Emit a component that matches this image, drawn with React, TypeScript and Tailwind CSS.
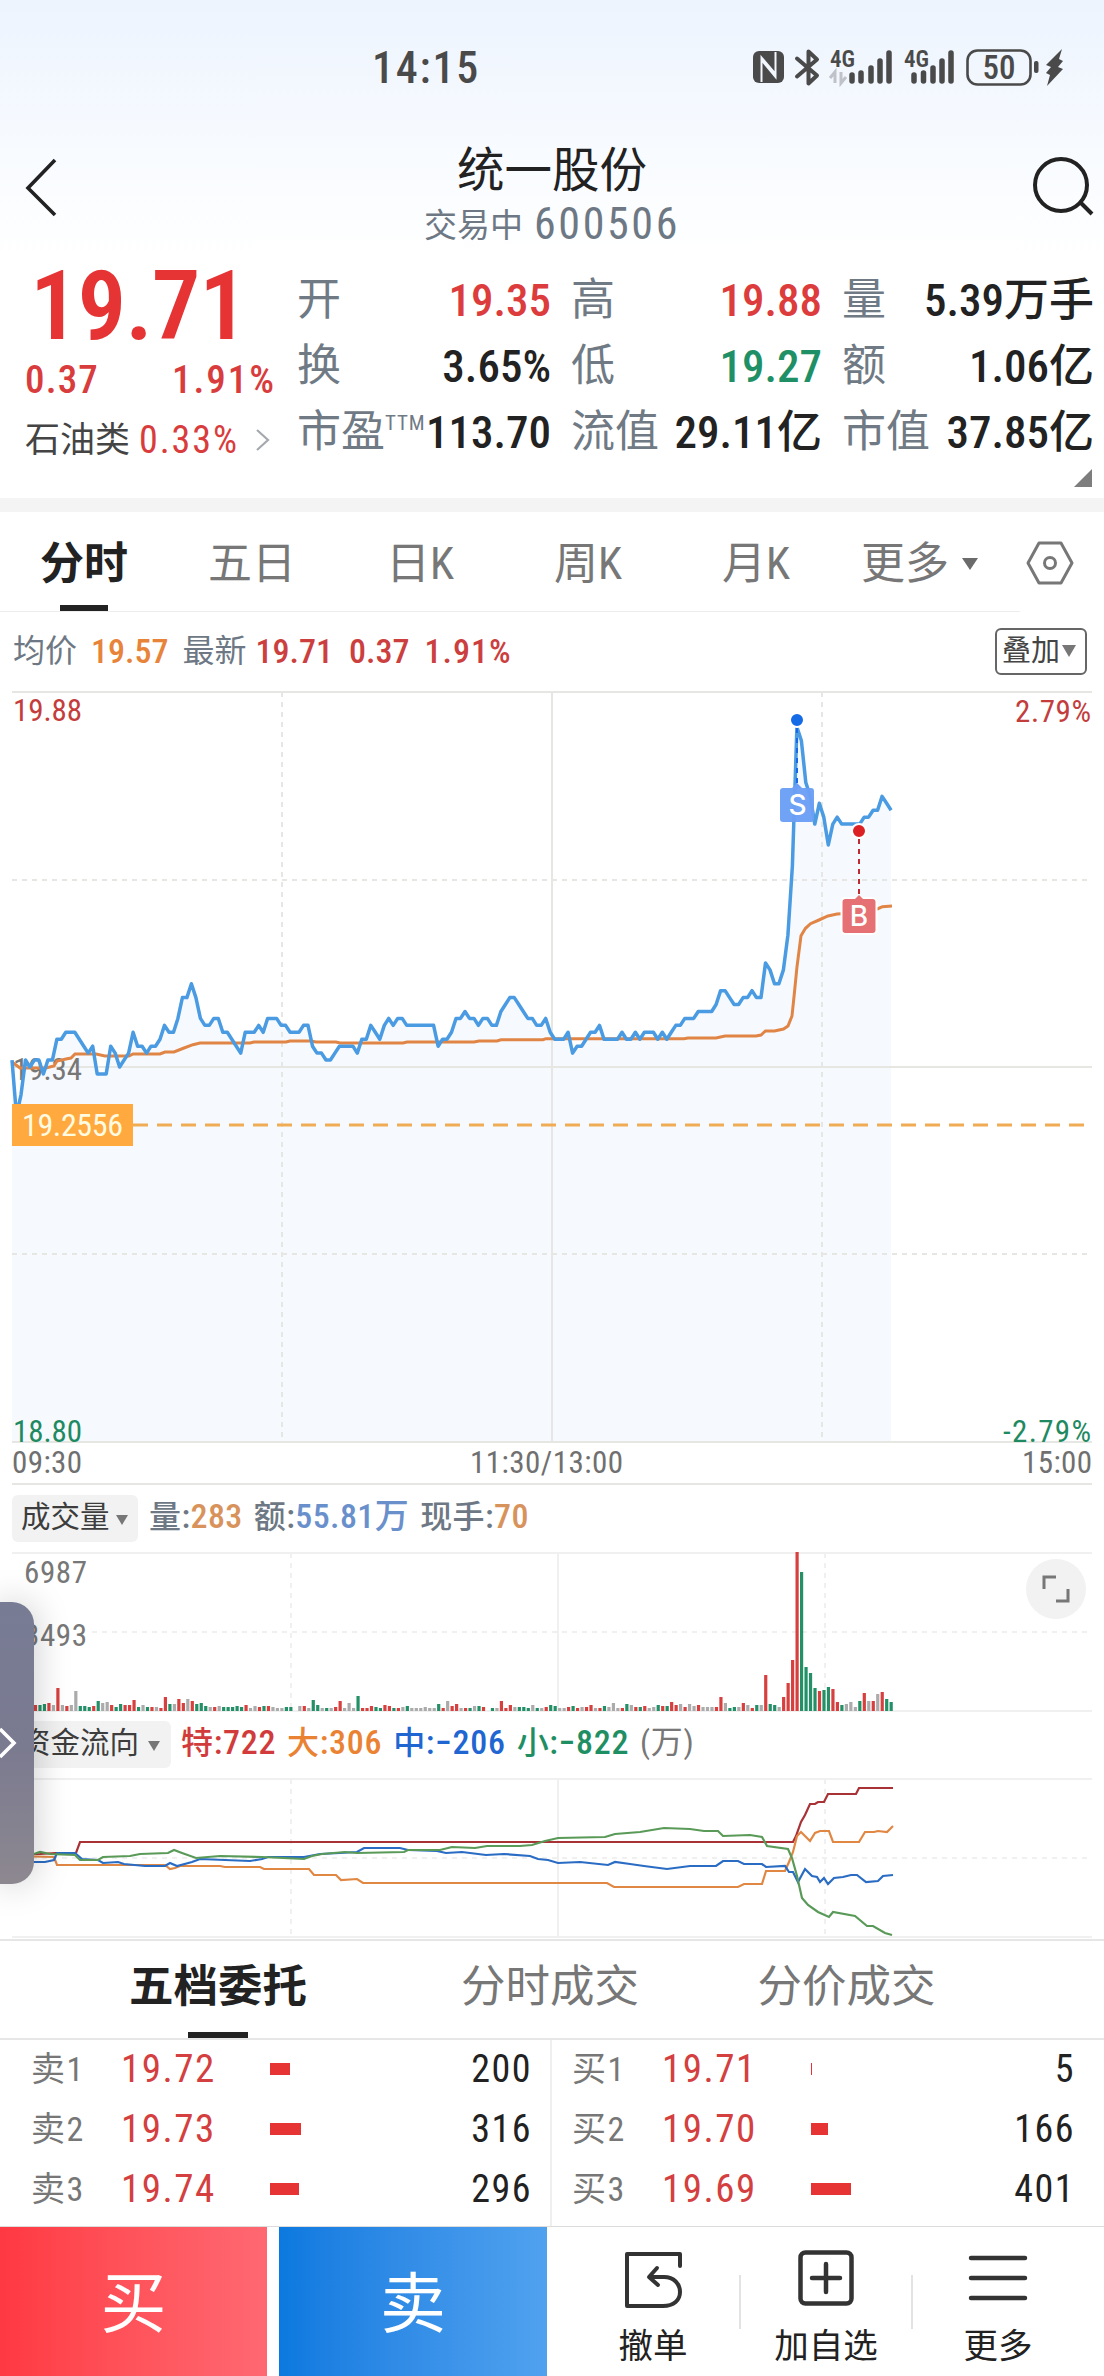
import type { ReactNode } from 'react';

const START_X = 12;
const STEP = 4.485;

// price per minute, in cents above the previous close (19.34)
const prices = [
  1, -7, -4, 1, 0, 1, 1, -1, 1, 1, 4, 4, 5, 5, 5, 4, 3, 2, 3, -1, -1, -1, 3, 2,
  0, 1, 2, 5, 3, 3, 2, 3, 3, 4, 6, 5, 5, 7, 10, 10, 12, 10, 7, 6, 6, 7, 7, 5, 5,
  4, 3, 2, 5, 5, 5, 6, 5, 7, 7, 7, 6, 6, 5, 5, 5, 6, 6, 3, 2, 2, 1, 1, 2, 3, 3,
  3, 3, 2, 4, 4, 6, 5, 4, 6, 7, 6, 7, 7, 6, 6, 6, 6, 6, 6, 6, 3, 4, 4, 5, 7, 7,
  8, 7, 7, 6, 7, 7, 6, 6, 8, 9, 10, 10, 9, 8, 7, 7, 6, 6, 7, 5, 4, 4, 4, 5, 2, 3,
  3, 4, 5, 5, 6, 4, 4, 4, 4, 5, 4, 4, 5, 4, 5, 5, 5, 4, 5, 4, 5, 6, 6, 7, 7, 7,
  8, 8, 8, 8, 9, 11, 11, 10, 9, 9, 10, 10, 11, 10, 10, 15, 14, 12, 12, 14, 19,
  29, 49, 47, 41, 39, 35, 38, 36, 32, 35, 36, 35, 35, 35, 35, 35, 36, 36, 37,
  37, 39, 38, 37,
];

const averageLine =
  '12,1062 16,1065 20,1068 46,1068 54,1066 57,1061 66,1059 71,1058 75,1054 96,1054 105,1056 129,1056 133,1054 160,1054 165,1052 174,1052 184,1048 193,1044.7 200,1043 250,1043 254,1042 286,1042 290,1041 311,1041 316,1042 336,1042 340,1043 403,1043 407,1042 474,1042 479,1041 497,1041 501,1039.7 543,1039.7 546,1038.7 684,1038.7 688,1038 716,1038 725,1036 756,1036 761,1035 765.5,1031 774.5,1031 783.5,1029 788,1026 792,1016 794.7,990 797,966.7 801,935.7 805.5,928.3 810.5,923.7 819,920 828,916 837,914 846,913.5 864,910.7 878,908.7 882.4,906.7 892,906';

// r = up, g = down, x = flat, followed by the bar height; _ is an empty minute
const volumes =
  'x6 r5 g6 r8 g6 r6 g6 g7 r8 x6 r23 x6 r5 x6 x20 g5 g5 g4 r5 g10 x8 x9 r6 g4 g7 r6 r6 r11 g4 x6 g4 r4 x4 r3 r14 g7 x7 r12 r8 x12 r10 g7 g8 g5 x4 r4 x5 g4 g4 g4 g5 g4 r6 x3 x5 r4 g5 r5 x4 x3 x3 g4 g4 _ x5 r5 x3 g11 g6 x3 g3 x3 r4 r10 x3 x8 x3 g15 r3 r3 r5 g4 g3 r6 r5 g3 r3 x4 g5 x3 x3 x3 x4 x3 x3 g7 r3 x10 r5 r7 x3 r3 g3 x5 g5 r4 _ g3 x3 r10 r3 r6 x4 g4 g4 g3 x6 g3 x3 r4 g6 g5 x3 x3 r4 g5 r3 x4 r4 r6 x3 r3 g5 x4 x8 x3 r3 g7 x6 r4 g4 r5 x3 x4 g6 r5 g5 r9 r6 x7 r4 x7 x5 r6 x4 x4 x4 r4 r14 x8 g3 g4 x4 r8 x6 r3 g6 x6 r36 g7 g6 x4 r14 r28 r51 r159 g139 g44 g38 g23 r20 g21 g24 r22 r9 g6 x7 x9 x4 g10 r18 x10 r10 x17 r19 g12 g9'.split(
    ' '
  );

const barColors: Record<string, string> = {
  r: '#d6403f',
  g: '#249068',
  x: '#ababab',
};

const flowLines = [
  {
    color: '#a83236',
    points:
      '12,1855 40,1854 56,1853 76,1853 80,1842 793,1842 796,1836 801,1822 805,1815 810,1804 815,1804 818,1802 824,1802 828,1794 856,1794 859,1788 893,1788',
  },
  {
    color: '#e18744',
    points:
      '12,1856 54,1857 57,1865 165,1865 170,1869 175,1868 180,1866 220,1866 225,1867 260,1867 264,1869 309,1869 314,1875 336,1875 341,1880 357,1879 363,1883 607,1883 614,1887 738,1887 744,1884 762,1884 766,1871 785,1871 789,1862 793,1852 797,1836 801,1832 805,1836 810,1841 815,1833 820,1831 829,1831 833,1842 859,1842 865,1832 874,1832 878,1831 887,1832 893,1826',
  },
  {
    color: '#2a6cc4',
    points:
      '12,1856 25,1860 34,1862 45,1862 54,1860 57,1853 75,1853 82,1859 98,1860 103,1863 118,1862 124,1864 145,1866 165,1866 170,1863 177,1866 192,1862 200,1859 250,1861 262,1859 268,1857 304,1857 320,1854 340,1853 357,1852 364,1848 400,1848 408,1850 437,1851 446,1853 462,1852 486,1855 504,1854 530,1856 538,1859 548,1860 558,1863 580,1862 608,1865 615,1862 630,1864 644,1866 667,1869 690,1866 716,1866 723,1861 738,1861 744,1864 762,1864 766,1867 785,1866 789,1872 793,1872 798,1882 805,1869 812,1876 817,1877 820,1882 824,1878 828,1884 834,1878 843,1877 851,1875 857,1875 866,1882 878,1881 883,1876 893,1875',
  },
  {
    color: '#5a9a58',
    points:
      '12,1855 34,1854 40,1852 50,1854 75,1855 80,1860 98,1860 103,1857 130,1856 140,1854 168,1853 174,1850 182,1853 196,1858 220,1856 262,1857 304,1859 312,1856 322,1854 345,1852 357,1853 404,1852 408,1850 440,1850 452,1847 475,1848 487,1846 520,1846 532,1845 545,1841 558,1838 605,1837 615,1834 640,1832 664,1828 690,1829 704,1831 718,1831 723,1836 750,1835 762,1837 767,1846 788,1849 792,1858 797,1876 802,1898 808,1905 818,1912 829,1917 833,1912 855,1916 867,1926 873,1926 885,1933 892,1935',
  },
];

const tabs = ['分时', '五日', '日K', '周K', '月K'];

const quotes = [
  { label: '开', value: '19.35', color: 'text-[#dc3c3c]' },
  { label: '高', value: '19.88', color: 'text-[#dc3c3c]' },
  { label: '量', value: '5.39万手', color: 'text-[#222]' },
  { label: '换', value: '3.65%', color: 'text-[#222]' },
  { label: '低', value: '19.27', color: 'text-[#1f9066]' },
  { label: '额', value: '1.06亿', color: 'text-[#222]' },
  { label: '市盈', sup: 'TTM', value: '113.70', color: 'text-[#222]' },
  { label: '流值', value: '29.11亿', color: 'text-[#222]' },
  { label: '市值', value: '37.85亿', color: 'text-[#222]' },
];

const sells = [
  { label: '卖1', price: '19.72', qty: 200, bar: 20 },
  { label: '卖2', price: '19.73', qty: 316, bar: 31 },
  { label: '卖3', price: '19.74', qty: 296, bar: 29 },
];

const buys = [
  { label: '买1', price: '19.71', qty: 5, bar: 1 },
  { label: '买2', price: '19.70', qty: 166, bar: 17 },
  { label: '买3', price: '19.69', qty: 401, bar: 40 },
];

const StatusBar = () => (
  <div className="flex h-[110px] items-center pt-[26px] pl-[372px] text-[#4a4a4a]">
    <span className="w-[380px] text-[44px] font-medium tracking-[0.04em]">
      14:15
    </span>
    <svg width="330" height="42" viewBox="0 0 330 42" fill="#4a4a4a">
      {/* NFC */}
      <rect x="1" y="4" width="31" height="32" rx="6" />
      <path
        d="M9.500 35V10.500L23.500 27V18M23.500 5v25L9.500 13"
        fill="none"
        stroke="#f2f6fe"
        strokeWidth="2"
      />
      <path
        d="M45 11.500l20 17-8.500 8V4.500l8.500 8-20 17"
        fill="none"
        stroke="#4a4a4a"
        strokeWidth="4"
        strokeLinejoin="round"
        strokeLinecap="round"
      />
      <text x="78" y="20" fontSize="23" fontWeight="600">
        4G
      </text>
      <path
        d="M83 36V25l-5 6M89 25v11l5-6"
        fill="none"
        stroke="#bfc2c8"
        strokeWidth="3"
      />
      <path
        d="M100 34v-6M109 34V26M119 34V21M128 34V14M137 34V6"
        stroke="#4a4a4a"
        strokeWidth="5.500"
        strokeLinecap="round"
      />
      <text x="152" y="20" fontSize="23" fontWeight="600">
        4G
      </text>
      <path
        d="M162 34v-6M171.500 34V26M181 34V21M190 34V14M199 34V6"
        stroke="#4a4a4a"
        strokeWidth="5.500"
        strokeLinecap="round"
      />
      <rect
        x="215.500"
        y="3.500"
        width="63"
        height="34"
        rx="10"
        fill="none"
        stroke="#4a4a4a"
        strokeWidth="2.600"
      />
      <text
        x="247"
        y="32"
        fontSize="33"
        fontWeight="500"
        textAnchor="middle"
      >
        50
      </text>
      <rect x="282" y="14" width="4.500" height="12" rx="2" />
      <path d="M310 2l-16 16 5 2-5 6 4 2-3 11 16-17-5-2 5-6-4-2z" />
    </svg>
  </div>
);

const NavBar = () => (
  <header className="flex h-[150px] items-center justify-between pr-[8px] pl-[24px]">
    <svg
      width="36"
      height="60"
      viewBox="0 0 36 60"
      fill="none"
      stroke="#222"
      strokeWidth="3.600"
      className="mt-[4px]"
    >
      <path d="M31 3L4 31l27 27" />
    </svg>
    <div className="flex flex-col items-center pt-[22px] pl-[14px]">
      <h1 className="text-[47.5px] leading-[56px] text-[#222]">统一股份</h1>
      <p className="mt-[2px] text-[44px] leading-[46px] text-[#6d7884]">
        <span className="align-[2px] text-[33px]">交易中</span>
        <span className="ml-[11px] tracking-[0.06em]">600506</span>
      </p>
    </div>
    <svg
      width="66"
      height="66"
      viewBox="0 0 66 66"
      fill="none"
      stroke="#222"
      strokeWidth="4"
    >
      <circle cx="31" cy="33" r="26" />
      <path d="M50 50l12 12" />
    </svg>
  </header>
);

const Quote = () => (
  <section className="relative flex h-[238px] pr-[9px]">
    <div className="w-[297px] pl-[25px]">
      <p className="h-[92px] pl-[5px] text-[97px] leading-[92px] font-semibold tracking-[-0.012em] text-[#e63434]">
        19.71
      </p>
      <p className="flex h-[56px] items-center justify-between pr-[21px] text-[39px] font-medium tracking-[0.03em] text-[#d93c3c]">
        <span>0.37</span>
        <span className="tracking-[0.05em]">1.91%</span>
      </p>
      <p className="flex h-[64px] items-center text-[35px] text-[#444]">
        <span>石油类</span>
        <span className="ml-[9px] text-[38px] tracking-[0.05em] text-[#d93c3c]">
          0.33%
        </span>
        <svg
          width="16"
          height="22"
          viewBox="0 0 16 22"
          fill="none"
          stroke="#a5a9ae"
          strokeWidth="2.200"
          className="ml-[16px]"
        >
          <path d="M2 1l11 10L2 21" />
        </svg>
      </p>
    </div>
    <div className="grid h-[198px] flex-1 grid-cols-[254px_251px_252px] gap-x-[20px] pt-[7px]">
      {quotes.map((q) => (
        <div
          key={q.label}
          className="flex h-[66px] items-center justify-between text-[44px] whitespace-nowrap"
        >
          <span className="flex text-[#6f7a85]">
            {q.label}
            {q.sup && (
              <span className="pt-[3px] text-[21px] leading-none tracking-[0.04em]">
                {q.sup}
              </span>
            )}
          </span>
          <span className={`text-[45px] font-medium ${q.color}`}>
            {q.value}
          </span>
        </div>
      ))}
    </div>
    <svg
      width="18"
      height="18"
      className="absolute right-[12px] bottom-[11px]"
      fill="#7d7d7d"
    >
      <path d="M18 0v18H0z" />
    </svg>
  </section>
);

const PeriodTabs = () => (
  <nav className="relative flex h-[100px] pt-1 text-[44px] text-[#777]">
    {tabs.map((tab, i) => (
      <div
        key={tab}
        className={`relative flex w-[168px] items-center justify-center ${
          i === 0 ? 'font-bold text-[#222]' : ''
        }`}
      >
        {tab}
        {i === 0 && (
          <span className="absolute bottom-[1px] left-[60px] h-[6px] w-[48px] bg-[#222]" />
        )}
      </div>
    ))}
    <div className="flex w-[180px] items-center pl-[21px]">
      更多
      <span className="ml-[13px] border-x-[8px] border-t-[12px] border-x-transparent border-t-[#6b6b6b]" />
    </div>
    <svg
      width="50"
      height="46"
      viewBox="0 0 50 46"
      fill="none"
      stroke="#777"
      strokeWidth="3"
      className="mt-[24px] ml-[5px]"
    >
      <path d="M14 3h22l11 20-11 20H14L3 23z" strokeLinejoin="round" />
      <circle cx="25" cy="23" r="5.500" />
    </svg>
    <span className="absolute bottom-0 left-0 h-px w-[1020px] bg-[#ededed]" />
  </nav>
);

const Legend = () => (
  <div className="flex h-[78px] items-center pr-[17px] pl-[13px] text-[34px] font-medium text-[#cc3f3f]">
    <span className="text-[32px] font-normal text-[#6d7884]">均价</span>
    <span className="ml-[14px] text-[#e8833a]">19.57</span>
    <span className="ml-[14px] text-[32px] font-normal text-[#6d7884]">
      最新
    </span>
    <span className="ml-[9px]">19.71</span>
    <span className="ml-[16px]">0.37</span>
    <span className="ml-[15px] tracking-[0.03em]">1.91%</span>
    <span className="ml-auto flex h-[47px] w-[92px] items-center rounded-md border-2 border-[#666] pl-[5px] text-[29px] font-normal text-[#444]">
      叠加
      <i className="ml-[2px] border-x-[7px] border-t-[12px] border-x-transparent border-t-[#777]" />
    </span>
  </div>
);

const gridStroke = '#e6e6e3';

const PriceChart = () => {
  const line = prices
    .map((p, i) => `${(START_X + i * STEP).toFixed(1)},${1067 - p * 6.94}`)
    .join(' ');

  return (
    <svg
      width="1104"
      height="795"
      viewBox="0 690 1104 795"
      fontSize="31"
      className="block"
    >
      <polygon points={`12,1442 ${line} 891,1442`} fill="#f6faff" />
      <g stroke={gridStroke} strokeWidth="2">
        <path d="M12 692H1092M12 1067H1092M552 692V1442" />
        <path d="M12 1442H1092M12 1484H1092" />
        <path
          d="M12 880H1092M12 1254H1092M282 692V1442M822 692V1442"
          strokeDasharray="5 5"
        />
      </g>
      <text x="13" y="1080" fill="#777" textLength="69">
        19.34
      </text>
      <polyline
        points={averageLine}
        fill="none"
        stroke="#e08545"
        strokeWidth="3"
      />
      <polyline
        points={line}
        fill="none"
        stroke="#4a9be2"
        strokeWidth="3.500"
        strokeLinejoin="round"
      />
      <path
        d="M133 1125H1092"
        stroke="#f0ab55"
        strokeWidth="3"
        strokeDasharray="15 9"
      />
      <rect x="12" y="1104" width="121" height="42" fill="#ffa93e" />
      <text x="22" y="1136" fill="#fffbe0" fontSize="32" textLength="101">
        19.2556
      </text>

      {/* sell marker */}
      <path
        d="M797 728V785"
        stroke="#1769e8"
        strokeWidth="2"
        strokeDasharray="5 5"
      />
      <circle
        cx="797"
        cy="720"
        r="7"
        fill="#156ae6"
        stroke="#fff"
        strokeWidth="2"
      />
      <path d="M792 788l5-5 5 5z" fill="#6b9ff5" />
      <rect
        x="780"
        y="788"
        width="34"
        height="34"
        rx="3"
        fill="#6b9ff5"
        opacity="0.97"
      />
      <text
        x="797.500"
        y="815"
        fill="#fff"
        fontSize="28"
        fontFamily="Inter"
        fontWeight="500"
        textAnchor="middle"
      >
        S
      </text>

      {/* buy marker */}
      <path
        d="M859 839V894"
        stroke="#c02a30"
        strokeWidth="2"
        strokeDasharray="5 5"
      />
      <circle
        cx="859"
        cy="831"
        r="7"
        fill="#dc2125"
        stroke="#fff"
        strokeWidth="2"
      />
      <rect
        x="841.500"
        y="898"
        width="35"
        height="36"
        rx="4"
        fill="#e57174"
        stroke="#fff"
        strokeWidth="2"
      />
      <path d="M854 900l5-5 5 5z" fill="#e57174" />
      <text
        x="859"
        y="926"
        fill="#fff"
        fontSize="28"
        fontFamily="Inter"
        fontWeight="500"
        textAnchor="middle"
      >
        B
      </text>

      <text x="13" y="721" fill="#c43d3d" textLength="69">
        19.88
      </text>
      <text x="1015" y="722" fill="#c43d3d" textLength="76">
        2.79%
      </text>
      <text x="13" y="1442" fill="#1f8a62" textLength="69">
        18.80
      </text>
      <text x="1003" y="1442" fill="#1f8a62" textLength="88">
        -2.79%
      </text>
      <g fill="#707070">
        <text x="12" y="1473" textLength="70">
          09:30
        </text>
        <text x="470" y="1473" textLength="153">
          11:30/13:00
        </text>
        <text x="1022" y="1473" textLength="70">
          15:00
        </text>
      </g>
    </svg>
  );
};

const Selector = ({
  children,
  wide,
}: {
  children: ReactNode;
  wide?: boolean;
}) => (
  <span
    className={`mt-[5px] flex h-[47px] items-center rounded-md bg-[#f2f2f2] pb-[2px] pl-[9px] text-[29.5px] font-normal tracking-normal text-[#3d3d3d] ${
      wide ? 'w-[159px]' : 'w-[126px]'
    }`}
  >
    {children}
    <i
      className={`mt-[5px] border-x-[6.5px] border-t-[10px] border-x-transparent border-t-[#777] ${
        wide ? 'ml-[9px]' : 'ml-[6px]'
      }`}
    />
  </span>
);

const VolumeChart = () => (
  <section>
    <div className="flex h-[66px] items-center pb-[4px] pl-[12px] text-[34px] font-medium tracking-[0.012em] whitespace-nowrap text-[#6d7884]">
      <Selector>成交量</Selector>
      <span className="ml-[11px]">
        <span className="text-[32px]">量</span>:
        <span className="text-[#d8935c]">283</span>
      </span>
      <span className="ml-[11px]">
        <span className="text-[32px]">额</span>:
        <span className="text-[#6a90cc]">55.81万</span>
      </span>
      <span className="ml-[11px]">
        <span className="text-[32px]">现手</span>:
        <span className="text-[#d8935c]">70</span>
      </span>
    </div>
    <div className="relative">
      <svg
        width="1104"
        height="162"
        viewBox="0 1551 1104 162"
        fontSize="31"
        className="block"
      >
        <g stroke="#f0f0f0" strokeWidth="2">
          <path d="M12 1553H1092M12 1711H1092M558 1553V1711" />
          <path
            d="M92 1632H1092M291 1553V1711M825 1553V1711"
            strokeDasharray="5 5"
          />
        </g>
        {volumes.map((v, i) =>
          v === '_' ? null : (
            <rect
              key={i}
              x={11.5 + i * 4.48}
              y={1711 - Number(v.slice(1))}
              width="3.200"
              height={Number(v.slice(1))}
              fill={barColors[v[0]]}
            />
          )
        )}
        <text x="24" y="1583" fill="#777" textLength="63">
          6987
        </text>
        <text x="24" y="1646" fill="#777" textLength="63">
          3493
        </text>
      </svg>
      <button className="absolute top-[8px] right-[18px] flex h-[60px] w-[60px] items-center justify-center rounded-full bg-[#f2f2f2]">
        <svg
          width="28"
          height="28"
          viewBox="0 0 28 28"
          fill="none"
          stroke="#777"
          strokeWidth="3"
        >
          <path d="M2 14V2h12M26 14v12H14" />
        </svg>
      </button>
    </div>
  </section>
);

const FlowChart = () => (
  <section className="border-b-2 border-[#e6e6e6]">
    <div className="flex h-[64px] items-center pb-[6px] pl-[12px] text-[34px] font-medium tracking-[0.02em] whitespace-nowrap">
      <Selector wide>资金流向</Selector>
      <span className="ml-[10px] text-[#d13b3b]">
        <span className="text-[32px]">特</span>:722
      </span>
      <span className="ml-[11px] text-[#ea8234]">
        <span className="text-[32px]">大</span>:306
      </span>
      <span className="ml-[11px] text-[#1f66d2]">
        <span className="text-[32px]">中</span>:−206
      </span>
      <span className="ml-[11px] text-[#1f8f63]">
        <span className="text-[32px]">小</span>:−822
      </span>
      <span className="ml-[11px] text-[32px] font-normal text-[#777]">
        (万)
      </span>
    </div>
    <svg
      width="1104"
      height="162"
      viewBox="0 1777 1104 162"
      fill="none"
      className="block"
    >
      <g stroke="#f0f0f0" strokeWidth="2">
        <path d="M12 1779H1092M12 1937H1092M558 1779V1937" />
        <path
          d="M12 1858H1092M291 1779V1937M825 1779V1937"
          strokeDasharray="5 5"
        />
      </g>
      {flowLines.map((line) => (
        <polyline
          key={line.color}
          points={line.points}
          stroke={line.color}
          strokeWidth="2.200"
        />
      ))}
    </svg>
  </section>
);

const OrderTabs = () => (
  <nav className="relative flex h-[99px] border-b-2 border-[#e6e6e6] pl-[60px] text-[44.5px] text-[#777]">
    <div className="relative flex w-[316px] items-center justify-center pb-[4px] font-bold text-[#222]">
      五档委托
      <span className="absolute bottom-0 left-[128px] h-[6px] w-[60px] bg-[#222]" />
    </div>
    <div className="flex w-[348px] items-center justify-center pb-[4px]">
      分时成交
    </div>
    <div className="flex w-[245px] items-center justify-center pb-[4px]">
      分价成交
    </div>
  </nav>
);

const OrderRow = ({ row }: { row: (typeof sells)[number] }) => (
  <li className="flex h-[60px] items-center pb-[2px] text-[38px] tracking-[0.04em]">
    <span className="w-[90px] text-[34px] text-[#777]">{row.label}</span>
    <span className="w-[149px] text-[39px] text-[#d43f3f]">{row.price}</span>
    <span className="h-[12px] bg-[#e63434]" style={{ width: row.bar }} />
    <span className="ml-auto text-[#222]">{row.qty}</span>
  </li>
);

const ActionBar = () => (
  <footer className="flex h-[150px] border-t border-[#dcdcdc] text-[#222]">
    <button className="w-[267px] bg-linear-to-r from-[#ff3842] to-[#ff6872] pt-[6px] text-[66px] text-white">
      买
    </button>
    <button className="ml-[12px] w-[268px] bg-linear-to-r from-[#0a79df] to-[#50a2ef] pt-[6px] text-[66px] text-white">
      卖
    </button>
    <div className="flex pt-[22px] pl-[20px] text-[34.5px]">
      <div className="flex w-[172px] flex-col items-center">
        <svg
          width="60"
          height="60"
          viewBox="0 0 60 60"
          fill="none"
          stroke="#333"
          strokeWidth="4"
          strokeLinecap="round"
          strokeLinejoin="round"
        >
          <path d="M57 17V5H4v52h36c11 0 17-6 17-14s-6-15-16-15H27" />
          <path d="M34 19l-8 9 9 8" />
        </svg>
        <span className="mt-[20px]">撤单</span>
      </div>
      <span className="mt-[26px] h-[54px] w-[2px] bg-[#e3e3e3]" />
      <div className="flex w-[170px] flex-col items-center">
        <svg
          width="60"
          height="60"
          viewBox="0 0 60 60"
          fill="none"
          stroke="#333"
          strokeWidth="4.500"
          strokeLinecap="round"
        >
          <rect x="4.500" y="3.500" width="51" height="51" rx="5" />
          <path d="M30 15v28M16 29h28" />
        </svg>
        <span className="mt-[20px]">加自选</span>
      </div>
      <span className="mt-[26px] h-[54px] w-[2px] bg-[#e3e3e3]" />
      <div className="flex w-[170px] flex-col items-center">
        <svg
          width="60"
          height="60"
          viewBox="0 0 60 60"
          stroke="#333"
          strokeWidth="4.500"
          strokeLinecap="round"
        >
          <path d="M3 9h54M3 29h54M3 49h54" />
        </svg>
        <span className="mt-[20px]">更多</span>
      </div>
    </div>
  </footer>
);

export default function App() {
  return (
    <div className="relative h-[2376px] w-[1104px] overflow-hidden bg-white font-['Roboto_Condensed','Noto_Sans_CJK_SC',sans-serif] leading-none">
      <div className="bg-linear-to-b from-[#edf4fe] via-[#f8fbff] via-60% to-white">
        <StatusBar />
        <NavBar />
      </div>
      <Quote />
      <div className="h-[14px] bg-[#f4f4f4]" />
      <PeriodTabs />
      <Legend />
      <PriceChart />
      <VolumeChart />
      <FlowChart />
      <OrderTabs />
      <div className="flex h-[186px]">
        <ul className="w-[552px] border-r-2 border-[#efefef] pr-[18px] pl-[31px]">
          {sells.map((row) => (
            <OrderRow key={row.label} row={row} />
          ))}
        </ul>
        <ul className="w-[552px] pr-[29px] pl-[20px]">
          {buys.map((row) => (
            <OrderRow key={row.label} row={row} />
          ))}
        </ul>
      </div>
      <ActionBar />

      {/* floating drawer handle */}
      <div className="absolute top-[1602px] left-0 flex h-[282px] w-[34px] items-center rounded-r-[22px] bg-linear-to-b from-[#777c94] via-[#7a7a90] to-[#8d8890] shadow-[0_0_36px_rgba(0,0,0,0.22)]">
        <svg
          width="18"
          height="34"
          viewBox="0 0 18 34"
          fill="none"
          stroke="#fff"
          strokeWidth="3.600"
        >
          <path d="M0 3l14 14L0 31" />
        </svg>
      </div>
    </div>
  );
}
